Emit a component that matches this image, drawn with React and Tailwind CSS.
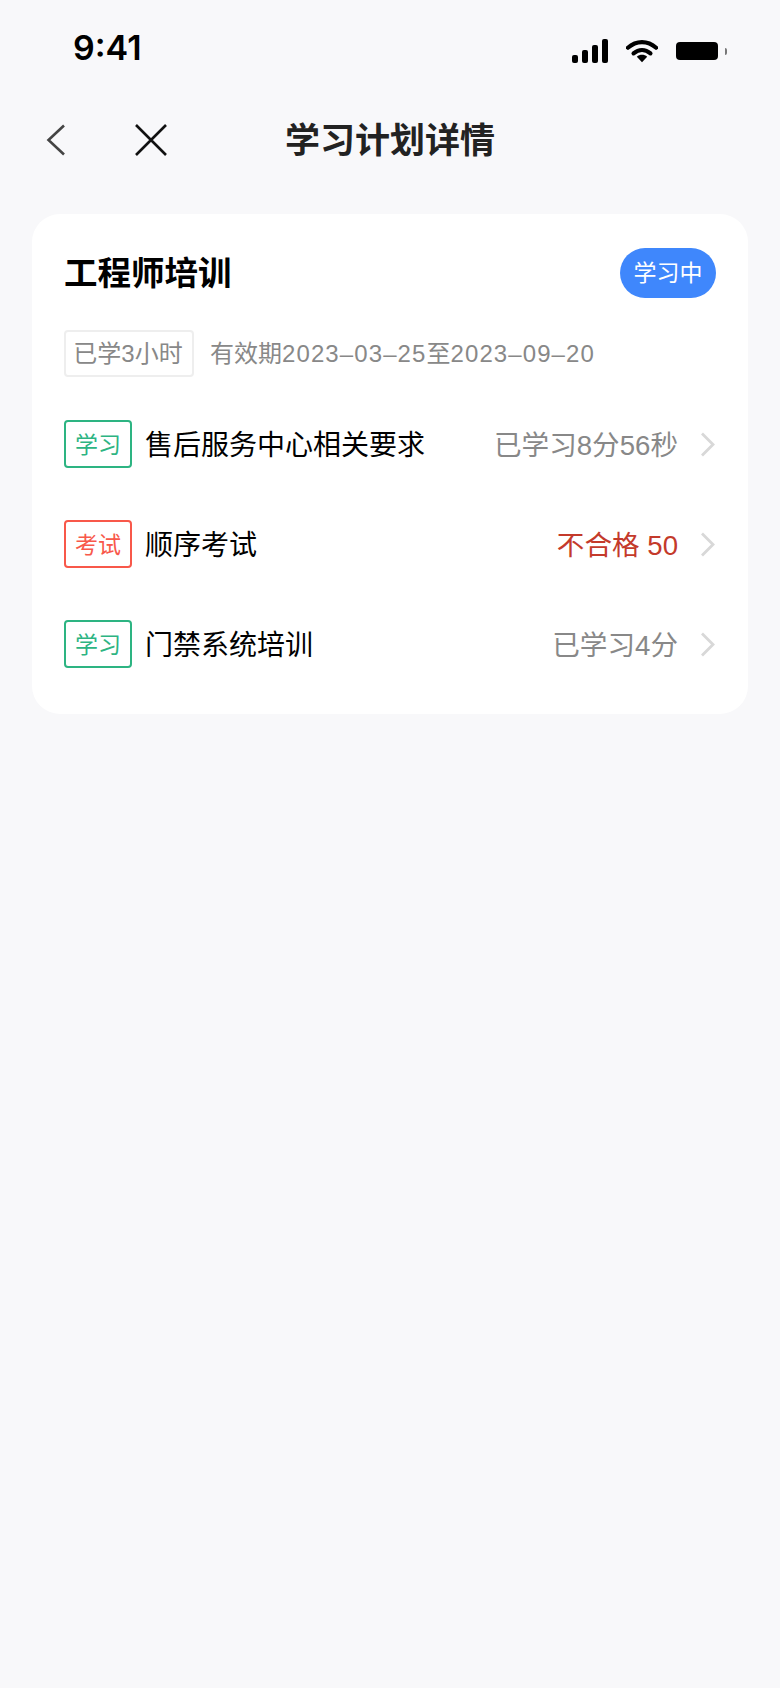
const font = { fontFamily: '"Liberation Sans", "Noto Sans CJK SC", sans-serif' };

const rows = [
  { type: "学习", exam: false, title: "售后服务中心相关要求", result: "已学习8分56秒" },
  { type: "考试", exam: true, title: "顺序考试", result: "不合格 50" },
  { type: "学习", exam: false, title: "门禁系统培训", result: "已学习4分" },
];

function StatusIcons() {
  return (
    <div className="flex items-center pt-[6px]">
      <svg width="36" height="24" viewBox="0 0 36 24" fill="#000">
        <rect x="0" y="16" width="6" height="8" rx="2" />
        <rect x="10" y="11" width="6" height="13" rx="2" />
        <rect x="20" y="6" width="6" height="18" rx="2" />
        <rect x="30" y="0" width="6" height="24" rx="2" />
      </svg>
      <svg className="ml-[18px]" width="32" height="24" viewBox="0 0 34 24" fill="none">
        <path d="M2 8.500C11 0.500 23 0.500 32 8.500" stroke="#000" strokeWidth="4.400" strokeLinecap="round" />
        <path d="M8 14.500C13.500 9.800 20.500 9.800 26 14.500" stroke="#000" strokeWidth="4.400" strokeLinecap="round" />
        <path d="M11.500 18C14.500 15.200 19.500 15.200 22.500 18L17 24Z" fill="#000" />
      </svg>
      <div className="ml-[18px] w-[42px] h-[18px] rounded-[4px] bg-black" />
      <div className="ml-[7px] w-[2px] h-[7px] rounded-r-[2px] bg-[#777]" />
    </div>
  );
}

function Chevron() {
  return (
    <svg className="ml-[22px] mr-[1px] shrink-0" width="15" height="25" viewBox="0 0 15 25" fill="none">
      <path d="M2 1.500L13 12.500L2 23.500" stroke="#d8d8d8" strokeWidth="2.800" />
    </svg>
  );
}

function Row({ row }) {
  const tagClass = row.exam ? "border-[#f8584a] text-[#f8584a]" : "border-[#2db482] text-[#2db482]";
  return (
    <div className="flex items-center h-[48px]">
      <div className={"w-[68px] h-[48px] shrink-0 flex items-center justify-center border-2 rounded-[4px] pt-[3px] text-[23px] " + tagClass}>
        {row.type}
      </div>
      <div className="ml-[13px] pt-[3px] text-[28px] text-black leading-none">{row.title}</div>
      <div className={"ml-auto pt-[3px] text-[27.600px] leading-none " + (row.exam ? "text-[#c43a2b]" : "text-[#888888]")}>
        {row.result}
      </div>
      <Chevron />
    </div>
  );
}

export default function App() {
  return (
    <div className="min-h-[1688px] bg-[#f8f8fa]" style={font}>
      <div className="h-[96px] flex items-center justify-between pl-[73px] pr-[53px]">
        <div className="text-[34px] font-semibold text-black pb-[2px]" style={{ fontFamily: "Inter, sans-serif" }}>9:41</div>
        <StatusIcons />
      </div>

      <div className="h-[88px] grid grid-cols-[1fr_auto_1fr] items-center px-[46px]">
        <div className="flex items-center">
          <svg width="20" height="32" viewBox="0 0 20 32" fill="none">
            <path d="M18 1.500L2.500 16L18 30.500" stroke="#444444" strokeWidth="2.600" />
          </svg>
          <svg className="ml-[68px]" width="34" height="32" viewBox="0 0 34 32" fill="none">
            <path d="M2 1L32 31M32 1L2 31" stroke="#111111" strokeWidth="2.600" />
          </svg>
        </div>
        <div className="text-[35px] font-bold text-[#222222] leading-none">学习计划详情</div>
        <div />
      </div>

      <div className="mt-[30px] mx-[32px] bg-white rounded-[28px] pt-[34px] pb-[46px] px-[32px]">
        <div className="flex items-center justify-between h-[50px]">
          <div className="pt-[2px] text-[33.500px] font-bold text-black leading-none">工程师培训</div>
          <div className="w-[96px] h-[50px] flex items-center justify-center rounded-full bg-[#3f87fc] text-white text-[23px]">
            学习中
          </div>
        </div>

        <div className="mt-[32px] flex items-center text-[24px] text-[#888888]">
          <div className="h-[47px] w-[130px] flex items-center justify-center border-2 border-[#eeeeee] rounded-[4px] pr-[2px]">
            已学3小时
          </div>
          <div className="ml-[16px]">
            有效期<span className="tracking-[1.100px]">2023–03–25</span>至<span className="tracking-[1.100px]">2023–09–20</span>
          </div>
        </div>

        <div className="mt-[43px] flex flex-col gap-[52px]">
          {rows.map((row, i) => (
            <Row key={i} row={row} />
          ))}
        </div>
      </div>
    </div>
  );
}
